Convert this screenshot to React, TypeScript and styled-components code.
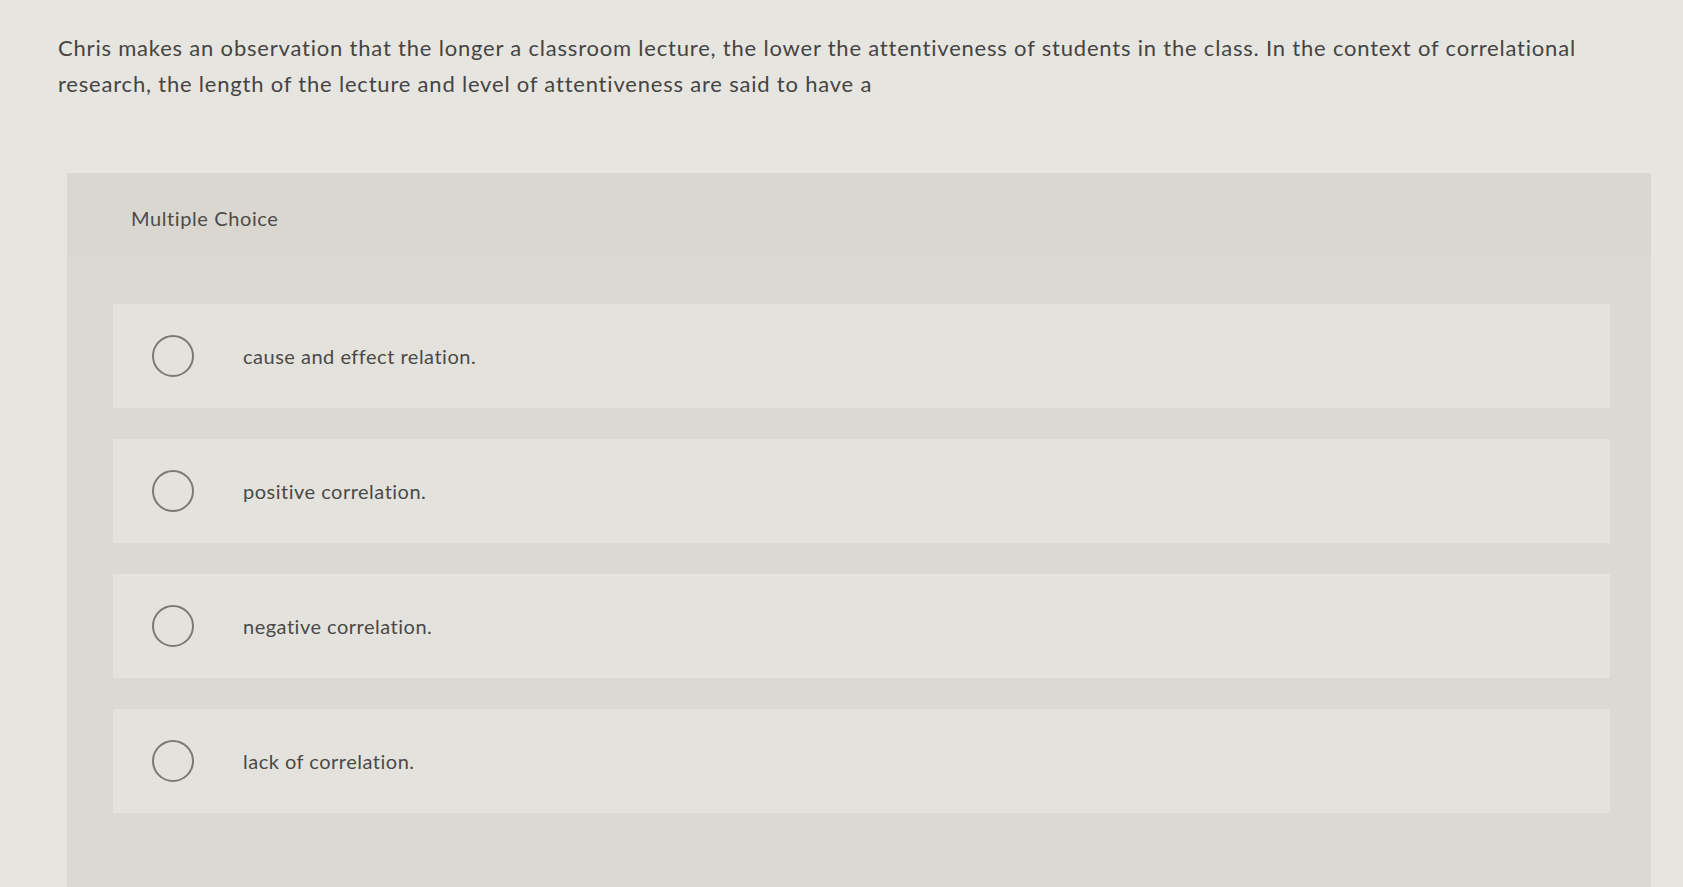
import React from "react";
import styled, { createGlobalStyle } from "styled-components";

const GlobalStyle = createGlobalStyle`
  html, body {
    margin: 0;
    padding: 0;
    background: #e7e5e0;
  }
  body {
    font-family: Lato, "Open Sans", Arial, sans-serif;
    color: #4b4a48;
  }
`;

const options = [
  "cause and effect relation.",
  "positive correlation.",
  "negative correlation.",
  "lack of correlation.",
];

const App = () => {
  return (
    <Page>
      <GlobalStyle />
      <Question>
        Chris makes an observation that the longer a classroom lecture, the lower the attentiveness of students in the class. In the
        context of correlational research, the length of the lecture and level of attentiveness are said to have a
      </Question>
      <Panel>
        <Header>Multiple Choice</Header>
        <Choices>
          {options.map((label) => (
            <Choice key={label}>
              <Radio />
              <Label>{label}</Label>
            </Choice>
          ))}
        </Choices>
      </Panel>
    </Page>
  );
};

export default App;

const Page = styled.div`
  width: 1683px;
  height: 887px;
  overflow: hidden;
  display: flex;
  flex-direction: column;
`;

const Question = styled.p`
  margin: 0;
  padding: 30px 80px 0 58px;
  font-size: 22px;
  letter-spacing: 0.8px;
  line-height: 36px;
  color: #454442;
`;

const Panel = styled.div`
  flex: 1;
  margin: 71px 32px 0 67px;
  background: #dcd9d3;
  display: flex;
  flex-direction: column;
`;

const Header = styled.div`
  height: 84px;
  display: flex;
  align-items: center;
  padding-left: 64px;
  padding-top: 6px;
  box-sizing: border-box;
  font-size: 20px;
  letter-spacing: 0.6px;
  color: #4c4b48;
  background: #dad7d1;
`;

const Choices = styled.div`
  display: flex;
  flex-direction: column;
  gap: 31px;
  padding: 47px 41px 0 46px;
`;

const Choice = styled.div`
  height: 104px;
  display: flex;
  align-items: center;
  padding-left: 39px;
  background: #e4e2dd;
`;

const Radio = styled.span`
  width: 42px;
  height: 42px;
  box-sizing: border-box;
  border: 2px solid #7b7976;
  border-radius: 50%;
  flex-shrink: 0;
`;

const Label = styled.span`
  margin-left: 49px;
  font-size: 20px;
  letter-spacing: 0.5px;
  color: #4a4947;
`;
